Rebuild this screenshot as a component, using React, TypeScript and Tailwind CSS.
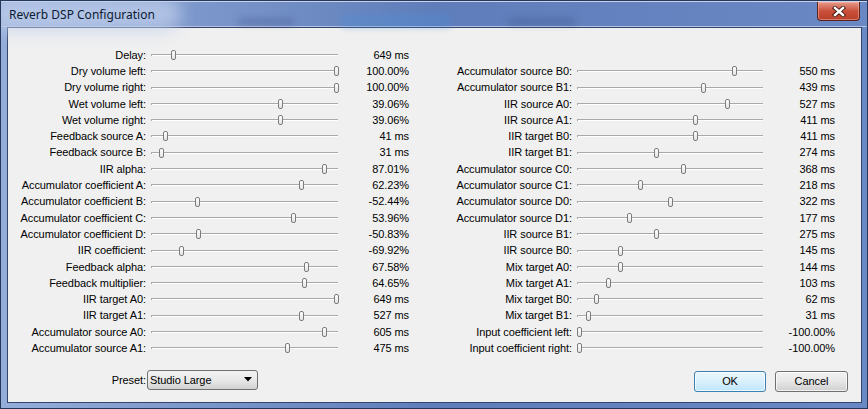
import React from "react";

type SliderRow = {
  label: string;
  thumb: number; // thumb centre, page x
  value: string;
};

const LEFT_TRACK_X = 151;
const RIGHT_TRACK_X = 577;

const leftRows: SliderRow[] = [
  { label: "Delay:", thumb: 173, value: "649 ms" },
  { label: "Dry volume left:", thumb: 336, value: "100.00%" },
  { label: "Dry volume right:", thumb: 336, value: "100.00%" },
  { label: "Wet volume left:", thumb: 280, value: "39.06%" },
  { label: "Wet volume right:", thumb: 280, value: "39.06%" },
  { label: "Feedback source A:", thumb: 165, value: "41 ms" },
  { label: "Feedback source B:", thumb: 161, value: "31 ms" },
  { label: "IIR alpha:", thumb: 324, value: "87.01%" },
  { label: "Accumulator coefficient A:", thumb: 301, value: "62.23%" },
  { label: "Accumulator coefficient B:", thumb: 197, value: "-52.44%" },
  { label: "Accumulator coefficient C:", thumb: 293, value: "53.96%" },
  { label: "Accumulator coefficient D:", thumb: 198, value: "-50.83%" },
  { label: "IIR coefficient:", thumb: 181, value: "-69.92%" },
  { label: "Feedback alpha:", thumb: 306, value: "67.58%" },
  { label: "Feedback multiplier:", thumb: 304, value: "64.65%" },
  { label: "IIR target A0:", thumb: 336, value: "649 ms" },
  { label: "IIR target A1:", thumb: 301, value: "527 ms" },
  { label: "Accumulator source A0:", thumb: 324, value: "605 ms" },
  { label: "Accumulator source A1:", thumb: 287, value: "475 ms" },
];

const rightRows: SliderRow[] = [
  { label: "Accumulator source B0:", thumb: 734, value: "550 ms" },
  { label: "Accumulator source B1:", thumb: 703, value: "439 ms" },
  { label: "IIR source A0:", thumb: 727, value: "527 ms" },
  { label: "IIR source A1:", thumb: 695, value: "411 ms" },
  { label: "IIR target B0:", thumb: 695, value: "411 ms" },
  { label: "IIR target B1:", thumb: 656, value: "274 ms" },
  { label: "Accumulator source C0:", thumb: 683, value: "368 ms" },
  { label: "Accumulator source C1:", thumb: 640, value: "218 ms" },
  { label: "Accumulator source D0:", thumb: 670, value: "322 ms" },
  { label: "Accumulator source D1:", thumb: 629, value: "177 ms" },
  { label: "IIR source B1:", thumb: 656, value: "275 ms" },
  { label: "IIR source B0:", thumb: 620, value: "145 ms" },
  { label: "Mix target A0:", thumb: 620, value: "144 ms" },
  { label: "Mix target A1:", thumb: 608, value: "103 ms" },
  { label: "Mix target B0:", thumb: 596, value: "62 ms" },
  { label: "Mix target B1:", thumb: 588, value: "31 ms" },
  { label: "Input coefficient left:", thumb: 579, value: "-100.00%" },
  { label: "Input coefficient right:", thumb: 579, value: "-100.00%" },
];

const Track: React.FC<{ offset: number }> = ({ offset }) => (
  <div className="relative h-full flex items-center w-full">
    <div className="h-[2px] w-full border-t border-l border-[#a9a9a9] bg-white" />
    <div
      className="absolute top-1/2 -translate-y-1/2 w-[5px] h-[10px] rounded-[2px] border border-[#7c7c7c] bg-gradient-to-b from-white to-[#e4e4e4]"
      style={{ left: offset - 2 }}
    />
  </div>
);

const Row: React.FC<{
  row: SliderRow;
  trackX: number;
  labelW: string;
  trackW: string;
  valueW: string;
}> = ({ row, trackX, labelW, trackW, valueW }) => (
  <div className="flex items-center h-[16.3px]">
    <div className={`${labelW} text-right whitespace-nowrap`}>{row.label}</div>
    <div className={`${trackW} ml-[5px] h-full`}>
      <Track offset={row.thumb - trackX} />
    </div>
    <div className={`${valueW} text-right whitespace-nowrap`}>{row.value}</div>
  </div>
);

const CloseButton = () => (
  <div className="absolute right-[7px] top-0 w-[43px] h-[19px] rounded-b-[4px] border border-t-0 border-[#5a2219] bg-gradient-to-b from-[#e59a8b] via-[#c9503a] to-[#b8402a] flex items-center justify-center shadow-[inset_0_0_0_1px_rgba(255,200,190,0.45)]">
    <svg width="14" height="11" viewBox="0 0 14 11">
      <path d="M3 2 L11 9 M11 2 L3 9" stroke="#3b1410" strokeWidth="4.2" strokeLinecap="square" />
      <path d="M3 2 L11 9 M11 2 L3 9" stroke="#ffffff" strokeWidth="2.4" strokeLinecap="square" />
    </svg>
  </div>
);

export default function App() {
  return (
    <div
      className="relative w-[868px] h-[409px] overflow-hidden bg-gradient-to-r from-[#95add9] via-[#5f7dba] to-[#6a88c4] border border-[#26375c] flex flex-col"
      style={{ fontFamily: '"Liberation Sans", Arial, sans-serif' }}
    >
      {/* title bar */}
      <div className="relative h-[26px] shrink-0 border-t border-t-[#c9d4ea] border-b border-b-[#b3c2e2]">
        <div className="absolute left-[-10px] top-[-6px] w-[190px] h-[36px] rounded-full bg-[#c3d1ec]/70 blur-[8px]" />
        <div className="absolute left-[237px] top-[16px] w-[56px] h-[7px] rounded bg-[#2a3f78]/25 blur-[3px]" />
        <div className="absolute left-[340px] top-[12px] w-[110px] h-[14px] rounded-[4px] bg-[#4d8fd8]/35 blur-[3px]" />
        <div className="absolute left-[507px] top-[16px] w-[68px] h-[7px] rounded bg-[#2a3f78]/25 blur-[3px]" />
        <span
          className="relative ml-[8px] leading-[25px] text-[12px] text-[#0c1a33]"
          style={{ fontFamily: '"Noto Sans", "Open Sans", sans-serif' }}
        >
          Reverb DSP Configuration
        </span>
        <CloseButton />
      </div>

      {/* client area */}
      <div className="ml-[6px] mr-[5px] h-[376px] border border-[#34466c] bg-[#f0f0f0] text-[11px] tracking-[-0.08px] text-black flex flex-col">
        <div className="flex pt-[18.8px]">
          <div className="flex flex-col">
            {leftRows.map((r) => (
              <Row
                key={r.label}
                row={r}
                trackX={LEFT_TRACK_X}
                labelW="w-[138px]"
                trackW="w-[187px]"
                valueW="w-[71px]"
              />
            ))}
          </div>
          <div className="flex flex-col pt-[16.3px]">
            {rightRows.map((r) => (
              <Row
                key={r.label}
                row={r}
                trackX={RIGHT_TRACK_X}
                labelW="w-[163px]"
                trackW="w-[186px]"
                valueW="w-[72px]"
              />
            ))}
          </div>
        </div>

        <div className="flex items-start mt-[13.5px] pr-[13px]">
          <div className="w-[138px] text-right leading-[20px]">Preset:</div>
          <div className="ml-[1px] w-[111px] h-[20px] rounded-[3px] border border-[#707070] bg-gradient-to-b from-[#f2f2f2] via-[#e9e9e9] to-[#d2d2d2] flex items-center pl-[2px] pr-[5px]">
            <span className="flex-1 leading-[18px]">Studio Large</span>
            <svg width="8" height="5" viewBox="0 0 8 5">
              <path d="M0 0 H8 L4 4.5 Z" fill="#000" />
            </svg>
          </div>
          <div className="ml-auto mt-[1px] flex gap-[9px]">
            <button
              type="button"
              className="w-[72px] h-[21px] rounded-[3px] border border-[#3c7fb1] bg-gradient-to-b from-[#eaf6fd] via-[#d9f0fc] to-[#bee6fd] shadow-[inset_0_0_0_1px_rgba(255,255,255,0.7)] leading-[19px]"
            >
              OK
            </button>
            <button
              type="button"
              className="w-[73px] h-[21px] rounded-[3px] border border-[#707070] bg-gradient-to-b from-[#f2f2f2] via-[#e6e6e6] to-[#d0d0d0] shadow-[inset_0_0_0_1px_rgba(255,255,255,0.7)] leading-[19px]"
            >
              Cancel
            </button>
          </div>
        </div>
      </div>
    </div>
  );
}
